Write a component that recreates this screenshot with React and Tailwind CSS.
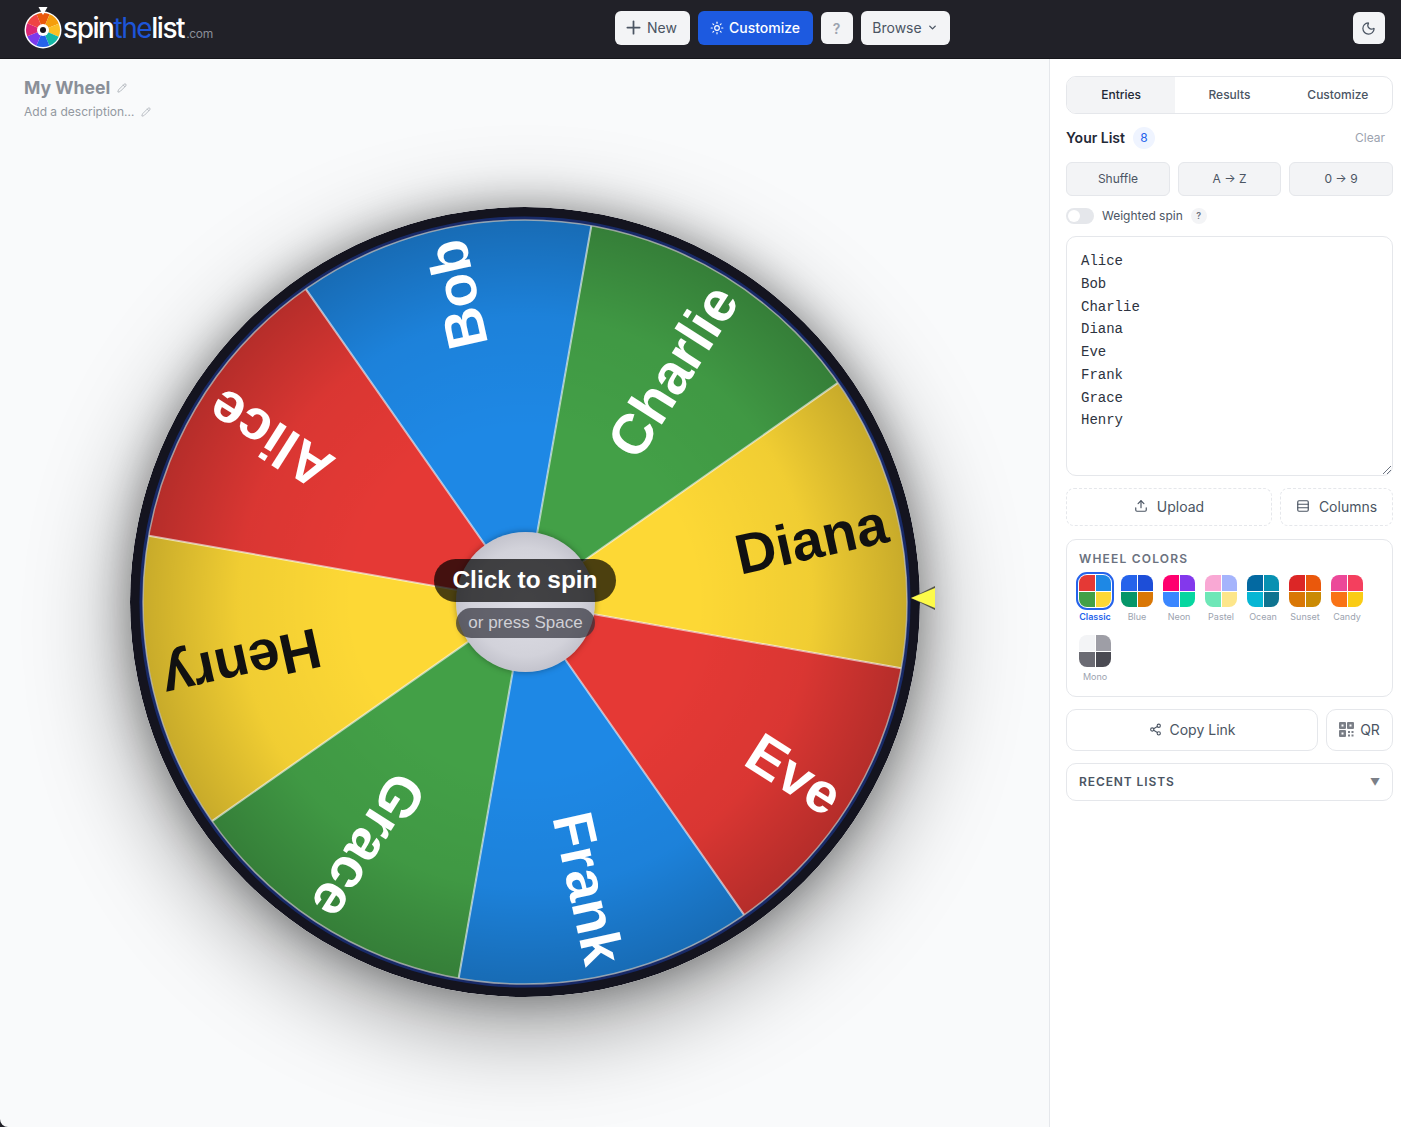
import React from 'react';
import { Plus, Sun, ChevronDown, Moon, Pencil, Upload, Rows3, Share2 } from 'lucide-react';

const CX = 400;
const CY = 400;
const R = 382;

const segments = [
  { name: 'Alice', color: '#E53935', start: 280 },
  { name: 'Bob', color: '#1E88E5', start: 325 },
  { name: 'Charlie', color: '#43A047', start: 10 },
  { name: 'Diana', color: '#FDD835', start: 55, dark: true },
  { name: 'Eve', color: '#E53935', start: 100 },
  { name: 'Frank', color: '#1E88E5', start: 145 },
  { name: 'Grace', color: '#43A047', start: 190 },
  { name: 'Henry', color: '#FDD835', start: 235, dark: true },
];

const point = (deg, r) => {
  const a = ((deg - 90) * Math.PI) / 180;
  return [CX + r * Math.cos(a), CY + r * Math.sin(a)];
};

const slicePath = (start) => {
  const [x1, y1] = point(start, R);
  const [x2, y2] = point(start + 45, R);
  return `M${CX} ${CY} L${x1} ${y1} A${R} ${R} 0 0 1 ${x2} ${y2} Z`;
};

const palettes = [
  { name: 'Classic', colors: ['#E53935', '#1E88E5', '#43A047', '#FDD835'] },
  { name: 'Blue', colors: ['#2563EB', '#1D4ED8', '#059669', '#D97706'] },
  { name: 'Neon', colors: ['#FF006E', '#8338EC', '#3A86FF', '#06D6A0'] },
  { name: 'Pastel', colors: ['#F9A8D4', '#A5B4FC', '#6EE7B7', '#FDE68A'] },
  { name: 'Ocean', colors: ['#0369A1', '#0891B2', '#06B6D4', '#0E7490'] },
  { name: 'Sunset', colors: ['#DC2626', '#EA580C', '#D97706', '#CA8A04'] },
  { name: 'Candy', colors: ['#EC4899', '#F43F5E', '#F97316', '#FACC15'] },
  { name: 'Mono', colors: ['#F3F4F6', '#9E9EA6', '#6B6B73', '#4A4A52'] },
];

const entries = ['Alice', 'Bob', 'Charlie', 'Diana', 'Eve', 'Frank', 'Grace', 'Henry'];

const Logo = () => (
  <div className="flex items-center">
    <svg width="40" height="46" viewBox="0 0 40 46" className="mt-[-2px]">
      <circle cx="19" cy="26" r="18.5" fill="#fff" />
      {['#EA580C', '#F59E0B', '#FBBF24', '#14B8A6', '#2563EB', '#7C3AED', '#DB2777', '#EF4444'].map((c, i) => {
        const a1 = ((i * 45 - 112) * Math.PI) / 180;
        const a2 = (((i + 1) * 45 - 112) * Math.PI) / 180;
        return (
          <path
            key={c}
            d={`M19 26 L${19 + 17 * Math.cos(a1)} ${26 + 17 * Math.sin(a1)} A17 17 0 0 1 ${19 + 17 * Math.cos(a2)} ${26 + 17 * Math.sin(a2)} Z`}
            fill={c}
          />
        );
      })}
      <circle cx="19" cy="26" r="6" fill="#fff" />
      <circle cx="19" cy="26" r="3" fill="#16161d" />
      <path d="M14.5 3 L23.5 3 L19 11 Z" fill="#fff" />
    </svg>
    <div className="flex items-baseline ml-[-1px]">
      <span className="text-[28px] leading-none tracking-[-1.45px] font-medium text-white">
        spin<span className="text-[#1d55d8] font-normal">the</span>list
      </span>
      <span className="text-[12px] text-[#8b8f99] ml-[2px] tracking-[-0.3px]">.com</span>
    </div>
  </div>
);

const Wheel = () => (
  <div className="relative w-[790px] h-[790px] rounded-full shadow-[0_0_40px_rgba(0,0,0,0.32),0_26px_100px_rgba(0,0,0,0.42)]">
    <svg width="790" height="790" viewBox="5 5 790 790" className="block rounded-full">
      <defs>
        <radialGradient id="rimShade" gradientUnits="userSpaceOnUse" cx={CX} cy={CY} r={R}>
          <stop offset="0.45" stopColor="#000" stopOpacity="0" />
          <stop offset="0.75" stopColor="#000" stopOpacity="0.05" />
          <stop offset="1" stopColor="#000" stopOpacity="0.21" />
        </radialGradient>
      </defs>
      <circle cx={CX} cy={CY} r="395" fill="#14141f" />
      <circle cx={CX} cy={CY} r="385.5" fill="#182a68" />
      {segments.map((s) => (
        <path key={s.name} d={slicePath(s.start)} fill={s.color} />
      ))}
      <circle cx={CX} cy={CY} r={R} fill="url(#rimShade)" />
      {segments.map((s) => {
        const [x, y] = point(s.start, R);
        return <line key={s.name} x1={CX} y1={CY} x2={x} y2={y} stroke="#fff" strokeOpacity="0.6" strokeWidth="2" />;
      })}
      <circle cx={CX} cy={CY} r={R} fill="none" stroke="#bdbdb8" strokeOpacity="0.75" strokeWidth="1.5" />
      {segments.map((s) => {
        const mid = s.start + 22.5;
        return (
          <text
            key={s.name}
            transform={`translate(${CX} ${CY}) rotate(${mid - 90})`}
            x="370"
            y="20"
            textAnchor="end"
            fontFamily="'Liberation Sans', Arial, sans-serif"
            fontWeight="700"
            fontSize="56.5"
            fill={s.dark ? '#111111' : '#ffffff'}
          >
            {s.name}
          </text>
        );
      })}
    </svg>
    {/* hub with the two labels lying over it */}
    <div className="absolute left-[326px] top-[325px] w-[139px] h-[140px] rounded-full bg-[radial-gradient(circle_at_50%_50%,#dedee6_0%,#d2d2da_55%,#a9a9b5_100%)] shadow-[0_0_6px_rgba(0,0,0,0.35)]" />
    <div className="absolute left-[304px] top-[352px] w-[182px] h-[43px] rounded-[22px] bg-black/70 flex items-center justify-center text-white text-[24.4px] font-bold font-['Liberation_Sans',sans-serif]">
      Click to spin
    </div>
    <div className="absolute left-[326px] top-[401px] w-[139px] h-[30px] rounded-[15px] bg-[#30303a]/70 flex items-center justify-center text-[#d0d0d6] text-[17px] font-['Liberation_Sans',sans-serif]">
      or press Space
    </div>
    {/* pointer */}
    <svg width="26" height="26" viewBox="0 0 26 26" className="absolute left-[780px] top-[378px]">
      <path d="M1 13 L25 1 L25 25 Z" fill="#55554a" />
      <path d="M1 13 L25 3 L25 23 Z" fill="#fdfb4a" />
    </svg>
  </div>
);

export default function App() {
  return (
    <div className="w-[1401px] h-[1127px] overflow-hidden flex flex-col bg-[#212128] font-['Inter',sans-serif]">
      <header className="h-[59px] shrink-0 relative flex items-center justify-center bg-[#212128] px-[24px] border-b border-[#16161b]">
        <div className="absolute left-[24px] top-[6px]">
          <Logo />
        </div>
        <nav className="flex items-center gap-2 ml-[163px] mt-[-2px]">
          <button className="h-[34px] w-[75px] pr-[4px] pb-[1px] rounded-[6px] bg-[#f3f4f6] text-[#4b5563] text-[14px] flex items-center justify-center gap-[3px]">
            <Plus size={21} className="text-[#4b5563]" /> New
          </button>
          <button className="h-[34px] w-[115px] pb-[1px] rounded-[6px] bg-[#1d5ae0] text-white text-[14px] font-medium flex items-center justify-center gap-[5px]">
            <Sun size={14} /> Customize
          </button>
          <button className="h-[32px] w-[32px] rounded-[6px] bg-[#f3f4f6] text-[#9ca3af] text-[14px] font-semibold">?</button>
          <button className="h-[34px] w-[89px] pb-[1px] rounded-[6px] bg-[#f3f4f6] text-[#4b5563] text-[14px] flex items-center justify-center gap-[5px]">
            Browse <ChevronDown size={11} strokeWidth={3} />
          </button>
        </nav>
        <button className="absolute right-[16px] top-[12px] h-[32px] w-[32px] pr-[2px] rounded-[6px] bg-[#f3f4f6] flex items-center justify-center text-[#4b5563]">
          <Moon size={15} />
        </button>
      </header>

      <div className="flex flex-1 min-h-0">
        <main className="flex-1 min-w-0 bg-[#f9fafb] rounded-bl-[8px] flex flex-col pl-[24px]">
          <div className="pt-[18px] h-[148px] shrink-0">
            <div className="flex items-center gap-[7px] text-[#8a8f98]">
              <span className="text-[17.6px] leading-[22px] font-bold">My Wheel</span>
              <Pencil size={10} className="text-[#a8adb5]" />
            </div>
            <div className="flex items-center gap-[7px] mt-[3px] text-[#9298a0]">
              <span className="text-[12px] leading-[20px]">Add a description…</span>
              <Pencil size={10} className="text-[#b0b5bc]" />
            </div>
          </div>
          <div className="pl-[106px]">
            <Wheel />
          </div>
        </main>

        <aside className="w-[352px] shrink-0 bg-white border-l border-[#e5e7eb] pl-[16px] pr-[8px] pt-[17px]">
          <div className="h-[38px] rounded-[10px] border border-[#e5e7eb] flex overflow-hidden text-[12px] font-medium">
            <div className="flex-1 bg-[#f3f4f6] text-[#1f2937] flex items-center justify-center">Entries</div>
            <div className="flex-1 text-[#4b5563] flex items-center justify-center">Results</div>
            <div className="flex-1 text-[#4b5563] flex items-center justify-center">Customize</div>
          </div>

          <div className="mt-[13px] h-[22px] flex items-center">
            <span className="text-[14px] pb-[2px] font-semibold text-[#1f2937]">Your List</span>
            <span className="ml-[8px] w-[22px] h-[22px] rounded-full bg-[#eff4ff] text-[#2563eb] text-[12px] flex items-center justify-center">8</span>
            <span className="ml-auto mr-[8px] text-[12px] text-[#9ca3af]">Clear</span>
          </div>

          <div className="mt-[13px] flex gap-[8px] text-[12px] text-[#4b5563]">
            <button className="w-[104px] h-[34px] rounded-[6px] bg-[#f3f4f6] border border-[#e5e7eb]">Shuffle</button>
            <button className="w-[103px] h-[34px] rounded-[6px] bg-[#f3f4f6] border border-[#e5e7eb]">A → Z</button>
            <button className="w-[104px] h-[34px] rounded-[6px] bg-[#f3f4f6] border border-[#e5e7eb]">0 → 9</button>
          </div>

          <div className="mt-[11px] h-[18px] flex items-center">
            <div className="relative w-[28px] h-[16px] rounded-full bg-[#e5e7eb]">
              <div className="absolute left-[2px] top-[2px] w-[12px] h-[12px] rounded-full bg-white" />
            </div>
            <span className="ml-[8px] text-[12px] text-[#4b5563]">Weighted spin</span>
            <span className="ml-[8px] w-[16px] h-[16px] rounded-full bg-[#f3f4f6] text-[#6b7280] text-[9px] font-semibold flex items-center justify-center">?</span>
          </div>

          <div className="mt-[11px] h-[240px] rounded-[10px] border border-[#e5e7eb] pl-[14px] pt-[13px] relative font-['Liberation_Mono',monospace] text-[14px] leading-[22.75px] text-[#2d3340]">
            {entries.map((e) => (
              <div key={e}>{e}</div>
            ))}
            <svg width="8" height="8" viewBox="0 0 8 8" className="absolute right-[1px] bottom-[1px] text-[#6b7280]">
              <path d="M0 8 L8 0 M4 8 L8 4" stroke="currentColor" strokeWidth="1" />
            </svg>
          </div>

          <div className="mt-[12px] flex gap-[8px] text-[14px] text-[#4b5563]">
            <button className="w-[206px] h-[38px] pb-[2px] rounded-[8px] border border-dashed border-[#e5e7eb] flex items-center justify-center gap-[9px]">
              <Upload size={14} /> Upload
            </button>
            <button className="w-[113px] h-[38px] pb-[2px] rounded-[8px] border border-dashed border-[#e5e7eb] flex items-center justify-center gap-[9px]">
              <Rows3 size={14} /> Columns
            </button>
          </div>

          <div className="mt-[13px] h-[158px] rounded-[10px] border border-[#e5e7eb] pl-[12px] pt-[11px]">
            <div className="text-[12px] leading-[16px] font-semibold tracking-[1.2px] text-[#6b7280]">WHEEL COLORS</div>
            <div className="mt-[8px] flex flex-wrap w-[294px] gap-x-[10px] gap-y-[12px]">
              {palettes.map((p, i) => (
                <div key={p.name} className="w-[32px] flex flex-col items-center">
                  <div className={i === 0 ? 'w-[32px] h-[32px] rounded-[8px] overflow-hidden grid grid-cols-2 gap-[1px] bg-white outline-2 outline-offset-1 outline-[#2563eb]' : 'w-[32px] h-[32px] rounded-[8px] overflow-hidden grid grid-cols-2 gap-[1px] bg-white'}>
                    {p.colors.map((c) => (
                      <div key={c} className="w-full h-full" style={{ backgroundColor: c }} />
                    ))}
                  </div>
                  <span className={i === 0 ? 'mt-[4px] text-[9px] leading-[12px] font-semibold text-[#2563eb]' : 'mt-[4px] text-[9px] leading-[12px] text-[#9ca3af]'}>{p.name}</span>
                </div>
              ))}
            </div>
          </div>

          <div className="mt-[12px] flex gap-[8px] text-[14px] text-[#4b5563]">
            <button className="w-[252px] h-[42px] pb-[2px] rounded-[10px] border border-[#e5e7eb] flex items-center justify-center gap-[8px]">
              <Share2 size={13} /> Copy Link
            </button>
            <button className="w-[67px] h-[42px] pb-[2px] rounded-[10px] border border-[#e5e7eb] flex items-center justify-center gap-[6px]">
              <svg width="15" height="15" viewBox="0 0 15 15" fill="#7b7f87">
                <path fillRule="evenodd" d="M0 1a1 1 0 0 1 1-1h5a1 1 0 0 1 1 1v5a1 1 0 0 1-1 1H1a1 1 0 0 1-1-1ZM2.5 2.5v2h2v-2Z" />
                <path fillRule="evenodd" d="M8 1a1 1 0 0 1 1-1h5a1 1 0 0 1 1 1v5a1 1 0 0 1-1 1H9a1 1 0 0 1-1-1ZM10.5 2.5v2h2v-2Z" />
                <path fillRule="evenodd" d="M0 9a1 1 0 0 1 1-1h5a1 1 0 0 1 1 1v5a1 1 0 0 1-1 1H1a1 1 0 0 1-1-1ZM2.5 10.5v2h2v-2Z" />
                <path d="M9 9h2v2H9ZM12.5 9h2v2h-2ZM9 12.5h2v2H9ZM12.5 12.5h2v2h-2Z" />
              </svg>
              QR
            </button>
          </div>

          <div className="mt-[12px] h-[38px] rounded-[10px] border border-[#e5e7eb] flex items-center pl-[12px] pr-[12px]">
            <span className="text-[12px] font-semibold tracking-[0.9px] text-[#4b5563]">RECENT LISTS</span>
            <span className="ml-auto text-[10px] text-[#7b7f87]">▼</span>
          </div>
        </aside>
      </div>
    </div>
  );
}
